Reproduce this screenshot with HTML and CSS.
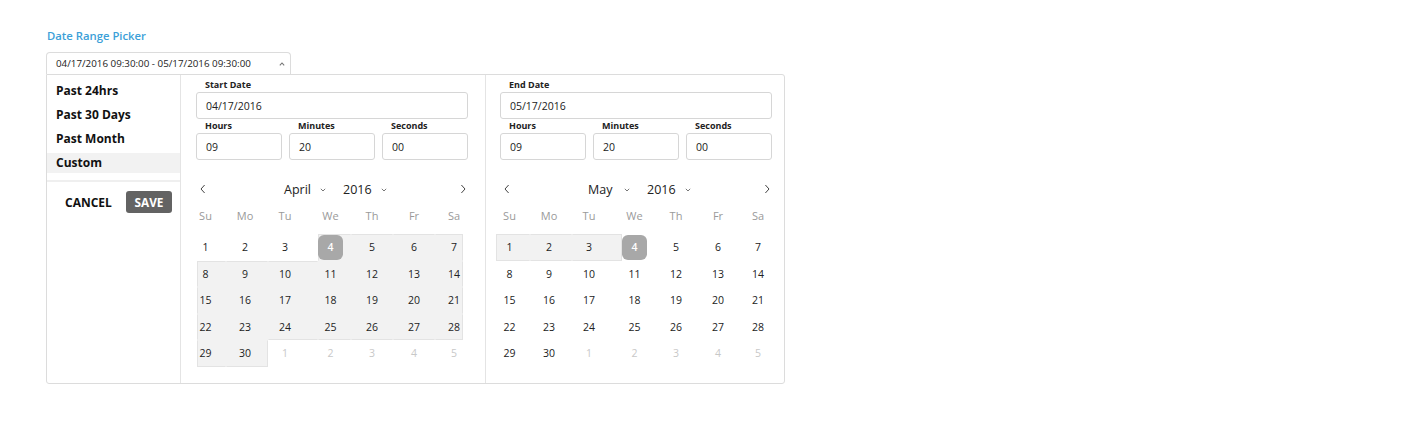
FILE: index.html
```html
<!DOCTYPE html>
<html>
<head>
<meta charset="utf-8">
<link rel="stylesheet" href="styles.css">
</head>
<body>
<div class="page">
  <div class="title">Date Range Picker</div>
  <div class="range-input">
    <span>04/17/2016 09:30:00 - 05/17/2016 09:30:00</span>
    <svg class="caret-up" width="6" height="4" viewBox="0 0 6 4"><path d="M0.8 3.4 L3 1 L5.2 3.4" fill="none" stroke="#777" stroke-width="1.1"/></svg>
  </div>
  <div class="panel">
    <div class="sidebar">
      <div class="preset">Past 24hrs</div>
      <div class="preset">Past 30 Days</div>
      <div class="preset">Past Month</div>
      <div class="preset active">Custom</div>
      <div class="sep"></div>
      <div class="actions">
        <span class="cancel">CANCEL</span>
        <span class="save">SAVE</span>
      </div>
    </div>

    <div class="pane left">
      <div class="lbl">Start Date</div>
      <div class="field">04/17/2016</div>
      <div class="times">
        <div><div class="lbl">Hours</div><div class="field">09</div></div>
        <div><div class="lbl">Minutes</div><div class="field">20</div></div>
        <div><div class="lbl">Seconds</div><div class="field">00</div></div>
      </div>
      <div class="cal-head">
        <svg class="nav" width="6" height="10" viewBox="0 0 6 10"><path d="M4.6 1 L1 5 L4.6 9" fill="none" stroke="#444" stroke-width="1"/></svg>
        <span class="month">April</span>
        <svg class="dd" width="6" height="4" viewBox="0 0 6 4"><path d="M0.8 0.8 L3 3 L5.2 0.8" fill="none" stroke="#777" stroke-width="1"/></svg>
        <span class="year">2016</span>
        <svg class="dd" width="6" height="4" viewBox="0 0 6 4"><path d="M0.8 0.8 L3 3 L5.2 0.8" fill="none" stroke="#777" stroke-width="1"/></svg>
        <span class="grow"></span>
        <svg class="nav" width="6" height="10" viewBox="0 0 6 10"><path d="M1.4 1 L5 5 L1.4 9" fill="none" stroke="#444" stroke-width="1"/></svg>
      </div>
      <div class="cols wk">
        <div>Su</div><div>Mo</div><div>Tu</div><div>We</div><div>Th</div><div>Fr</div><div>Sa</div>
      </div>
      <div class="cols days">
        <div>1</div><div>2</div><div>3</div><div class="in t l"><span class="sel">4</span></div><div class="in t">5</div><div class="in t">6</div><div class="in t r">7</div>
        <div class="in t l">8</div><div class="in t">9</div><div class="in t">10</div><div class="in">11</div><div class="in">12</div><div class="in">13</div><div class="in r">14</div>
        <div class="in l">15</div><div class="in">16</div><div class="in">17</div><div class="in">18</div><div class="in">19</div><div class="in">20</div><div class="in r">21</div>
        <div class="in l">22</div><div class="in">23</div><div class="in b">24</div><div class="in b">25</div><div class="in b">26</div><div class="in b">27</div><div class="in b r">28</div>
        <div class="in l b">29</div><div class="in b r">30</div><div class="mute">1</div><div class="mute">2</div><div class="mute">3</div><div class="mute">4</div><div class="mute">5</div>
      </div>
    </div>

    <div class="pane right">
      <div class="lbl">End Date</div>
      <div class="field">05/17/2016</div>
      <div class="times">
        <div><div class="lbl">Hours</div><div class="field">09</div></div>
        <div><div class="lbl">Minutes</div><div class="field">20</div></div>
        <div><div class="lbl">Seconds</div><div class="field">00</div></div>
      </div>
      <div class="cal-head">
        <svg class="nav" width="6" height="10" viewBox="0 0 6 10"><path d="M4.6 1 L1 5 L4.6 9" fill="none" stroke="#444" stroke-width="1"/></svg>
        <span class="month">May</span>
        <svg class="dd" width="6" height="4" viewBox="0 0 6 4"><path d="M0.8 0.8 L3 3 L5.2 0.8" fill="none" stroke="#777" stroke-width="1"/></svg>
        <span class="year">2016</span>
        <svg class="dd" width="6" height="4" viewBox="0 0 6 4"><path d="M0.8 0.8 L3 3 L5.2 0.8" fill="none" stroke="#777" stroke-width="1"/></svg>
        <span class="grow"></span>
        <svg class="nav" width="6" height="10" viewBox="0 0 6 10"><path d="M1.4 1 L5 5 L1.4 9" fill="none" stroke="#444" stroke-width="1"/></svg>
      </div>
      <div class="cols wk">
        <div>Su</div><div>Mo</div><div>Tu</div><div>We</div><div>Th</div><div>Fr</div><div>Sa</div>
      </div>
      <div class="cols days">
        <div class="in t b l">1</div><div class="in t b">2</div><div class="in t b r">3</div><div><span class="sel">4</span></div><div>5</div><div>6</div><div>7</div>
        <div>8</div><div>9</div><div>10</div><div>11</div><div>12</div><div>13</div><div>14</div>
        <div>15</div><div>16</div><div>17</div><div>18</div><div>19</div><div>20</div><div>21</div>
        <div>22</div><div>23</div><div>24</div><div>25</div><div>26</div><div>27</div><div>28</div>
        <div>29</div><div>30</div><div class="mute">1</div><div class="mute">2</div><div class="mute">3</div><div class="mute">4</div><div class="mute">5</div>
      </div>
    </div>
  </div>
</div>
</body>
</html>
```

FILE: styles.css
```css
* { box-sizing: border-box; }
body {
  margin: 0;
  background: #fff;
  font-family: "Open Sans", "Noto Sans", sans-serif;
  color: #222;
}
.page {
  padding: 28px 0 0 46px;
}
.title {
  font-size: 11.3px;
  line-height: 15px;
  font-weight: 600;
  color: #3c9fd8;
  margin-left: 1px;
  margin-bottom: 9px;
}
.range-input {
  width: 245px;
  height: 22px;
  border: 1px solid #dcdcdc;
  border-bottom: none;
  border-radius: 4px 4px 0 0;
  display: flex;
  align-items: center;
  padding: 0 5px 0 9px;
  font-size: 9.8px;
  color: #222;
}
.range-input span { flex: 1; }
.caret-up { margin-top: 1px; }

.panel {
  width: 739px;
  height: 310px;
  border: 1px solid #dcdcdc;
  border-radius: 0 3px 3px 3px;
  display: flex;
}
.sidebar {
  width: 134px;
  border-right: 1px solid #e4e4e4;
  padding-top: 6px;
}
.preset {
  height: 20px;
  line-height: 20px;
  margin-bottom: 4px;
  padding-left: 9px;
  font-size: 12px;
  font-weight: 700;
  color: #111;
}
.preset.active {
  background: #f2f2f2;
}
.sep {
  height: 2px;
  background: #efefef;
  margin-top: 7px;
}
.actions {
  display: flex;
  align-items: center;
  margin-top: 9px;
  padding-left: 18px;
}
.cancel {
  font-size: 12px;
  font-weight: 700;
  color: #111;
  width: 61px;
}
.save {
  width: 46px;
  height: 22px;
  line-height: 22px;
  text-align: center;
  background: #636363;
  color: #fff;
  border-radius: 3px;
  font-size: 11.8px;
  font-weight: 700;
}

.pane {
  padding-top: 4px;
}
.pane.left {
  width: 305px;
  border-right: 1px solid #e4e4e4;
  padding-left: 15px;
  padding-right: 17px;
}
.pane.right {
  width: 298px;
  padding-left: 14px;
  padding-right: 12px;
}
.lbl {
  font-size: 9px;
  line-height: 12px;
  font-weight: 700;
  color: #222;
  padding-left: 9px;
  margin-bottom: 1px;
}
.field {
  height: 27px;
  border: 1px solid #d6d6d6;
  border-radius: 3px;
  font-size: 10.5px;
  line-height: 26px;
  padding-left: 9px;
  color: #222;
}
.times {
  display: grid;
  grid-template-columns: 1fr 1fr 1fr;
  column-gap: 7px;
  margin-top: 1px;
}
.times .lbl { margin-bottom: 1px; }

.cal-head {
  display: flex;
  align-items: center;
  height: 20px;
  margin-top: 19px;
  padding: 0 2px 0 4px;
}
.cal-head .nav { flex: none; }
.cal-head .month {
  margin-left: 78px;
  width: 36px;
  font-size: 12.5px;
  color: #222;
}
.cal-head .dd { flex: none; margin-top: 1px; }
.cal-head .year {
  margin-left: 17px;
  width: 38px;
  font-size: 12.5px;
  color: #222;
}
.cal-head .grow { flex: 1; }

.cols {
  display: grid;
  grid-template-columns: 29px 42px 50px 33px 42px 42px 28px;
}
.pane.left .cols { margin-left: 1px; }
.pane.right .cols {
  margin-left: -4px;
  grid-template-columns: 34px 42px 50px 33px 42px 42px 28px;
}
.cols > div {
  border: 1px solid transparent;
  display: flex;
  align-items: center;
  justify-content: center;
  font-size: 10.5px;
}
.cols > div:nth-child(7n+1) { padding-right: 12px; }
.pane.right .cols > div:nth-child(7n+1) { padding-left: 5px; }
.cols > div:nth-child(7n+2) { padding-right: 4px; }
.cols > div:nth-child(7n+3) { padding-right: 16px; }
.cols > div:nth-child(7n+4) { padding-right: 8px; }
.cols > div:nth-child(7n+7) { padding-left: 10px; }

.wk {
  margin-top: 3px;
  height: 26px;
}
.wk > div {
  color: #9a9a9a;
  font-size: 11px;
}
.days {
  margin-top: 6px;
  grid-auto-rows: 26.5px;
}
.days > div { color: #222; }
.days > div.mute { color: #c8c8c8; }
.days > div.in { background: #f2f2f2; }
.days > div.t { border-top-color: #e3e3e3; }
.days > div.b { border-bottom-color: #e3e3e3; }
.days > div.l { border-left-color: #e3e3e3; }
.days > div.r { border-right-color: #e3e3e3; }
.sel {
  flex: none;
  width: 25px;
  height: 25px;
  border-radius: 6px;
  background: #a8a8a8;
  color: #fff;
  font-weight: 600;
  display: flex;
  align-items: center;
  justify-content: center;
}
```
